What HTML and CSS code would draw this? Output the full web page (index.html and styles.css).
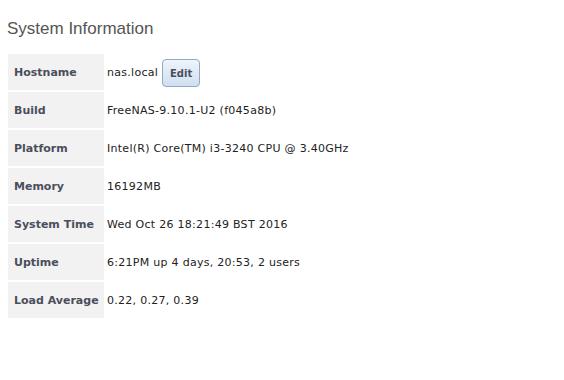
FILE: index.html
```html
<!DOCTYPE html>
<html lang="en">
<head>
    <meta charset="UTF-8">
    <title>System Information</title>
    <link rel="stylesheet" href="styles.css">
</head>
<body>

<div class="panel">
    <h2>System Information</h2>
    <div class="info">
        <div class="label">Hostname</div>
        <div class="value">nas.local <button class="btn">Edit</button></div>

        <div class="label">Build</div>
        <div class="value">FreeNAS-9.10.1-U2 (f045a8b)</div>

        <div class="label">Platform</div>
        <div class="value">Intel(R) Core(TM) i3-3240 CPU @ 3.40GHz</div>

        <div class="label">Memory</div>
        <div class="value">16192MB</div>

        <div class="label">System Time</div>
        <div class="value">Wed Oct 26 18:21:49 BST 2016</div>

        <div class="label">Uptime</div>
        <div class="value">6:21PM up 4 days, 20:53, 2 users</div>

        <div class="label">Load Average</div>
        <div class="value">0.22, 0.27, 0.39</div>
    </div>
</div>

</body>
</html>
```

FILE: styles.css
```css
body {
    margin: 0;
    background-color: #fff;
    font-family: "DejaVu Sans", Verdana, sans-serif;
    font-size: 11px;
}
.panel {
    padding: 19px 8px;
}
h2 {
    font-family: "Liberation Sans", Arial, sans-serif;
    font-weight: normal;
    font-size: 17px;
    color: #555;
    margin: 0 0 15px -1px;
}
.info {
    display: grid;
    grid-template-columns: 96px auto;
    grid-auto-rows: 36px;
    column-gap: 2px;
    row-gap: 2px;
    justify-content: start;
}
.label {
    background-color: #f2f2f2;
    color: #4b4e5c;
    font-weight: bold;
    padding-left: 6px;
    display: flex;
    align-items: center;
}
.value {
    color: #222;
    padding-left: 1px;
    letter-spacing: 0.28px;
    display: flex;
    align-items: center;
}
.btn {
    margin-left: 4px;
    width: 38px;
    height: 28px;
    font-family: inherit;
    font-size: 10px;
    font-weight: bold;
    letter-spacing: 0;
    color: #4b4e5c;
    background: linear-gradient(#eef4fb, #cfdff0);
    border: 1px solid #94a9c2;
    border-radius: 4px;
    padding: 0;
    margin-top: 2px;
}
```
